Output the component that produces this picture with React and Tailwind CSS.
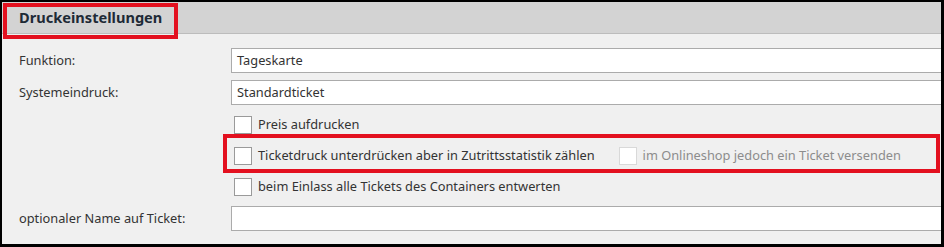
export default function App() {
  const font = { fontFamily: '"Noto Sans", "Open Sans", sans-serif' };

  function Box({ disabled }) {
    return (
      <div className={`w-[18px] h-[18px] shrink-0 bg-white border ${disabled ? 'border-[#d9d9d9]' : 'border-[#9a9a9a]'}`}></div>
    );
  }

  return (
    <div className="w-[944px] h-[247px] bg-black pt-[2px] pl-[2px] pr-[3px] pb-[3px]" style={font}>
      <div className="w-full h-full bg-[#f0f0f0] flex flex-col text-[12.8px] text-[#333]">
        {/* Header */}
        <div className="relative h-[32px] shrink-0 bg-[#d3d3d3] border-b border-[#bcbcbc] flex items-center pl-[17px]">
          <span className="font-bold text-[14.6px] text-[#1e2a36]">Druckeinstellungen</span>
          <div className="absolute left-[1px] top-[1px] w-[175px] h-[36px] border-[4px] border-[#e3101f]"></div>
        </div>

        <div className="flex flex-col pt-[14px]">
          <div className="flex items-center h-[25px]">
            <div className="w-[229px] pl-[17px]">Funktion:</div>
            <div className="flex-1 h-full bg-white border border-[#ababab] border-r-0 pl-[5px] flex items-center">Tageskarte</div>
          </div>
          <div className="flex items-center h-[25px] mt-[7px]">
            <div className="w-[229px] pl-[17px]">Systemeindruck:</div>
            <div className="flex-1 h-full bg-white border border-[#ababab] border-r-0 pl-[5px] flex items-center">Standardticket</div>
          </div>

          <div className="flex items-center h-[31px] mt-[4px] pl-[232px]">
            <Box />
            <span className="ml-[6px]">Preis aufdrucken</span>
          </div>

          <div className="relative flex items-center h-[31px] pl-[232px]">
            <Box />
            <span className="ml-[6px]">Ticketdruck unterdrücken aber in Zutrittsstatistik zählen</span>
            <div className="ml-[24px] flex items-center">
              <Box disabled />
              <span className="ml-[6px] text-[#8c8c8c]">im Onlineshop jedoch ein Ticket versenden</span>
            </div>
            <div className="absolute left-[221px] top-[-6px] w-[717px] h-[39px] border-[4px] border-[#e3101f]"></div>
          </div>

          <div className="flex items-center h-[31px] pl-[232px]">
            <Box />
            <span className="ml-[6px]">beim Einlass alle Tickets des Containers entwerten</span>
          </div>

          <div className="flex items-center h-[25px] mt-[4px]">
            <div className="w-[229px] pl-[17px]">optionaler Name auf Ticket:</div>
            <div className="flex-1 h-full bg-white border border-[#ababab] border-r-0"></div>
          </div>
        </div>
      </div>
    </div>
  );
}
